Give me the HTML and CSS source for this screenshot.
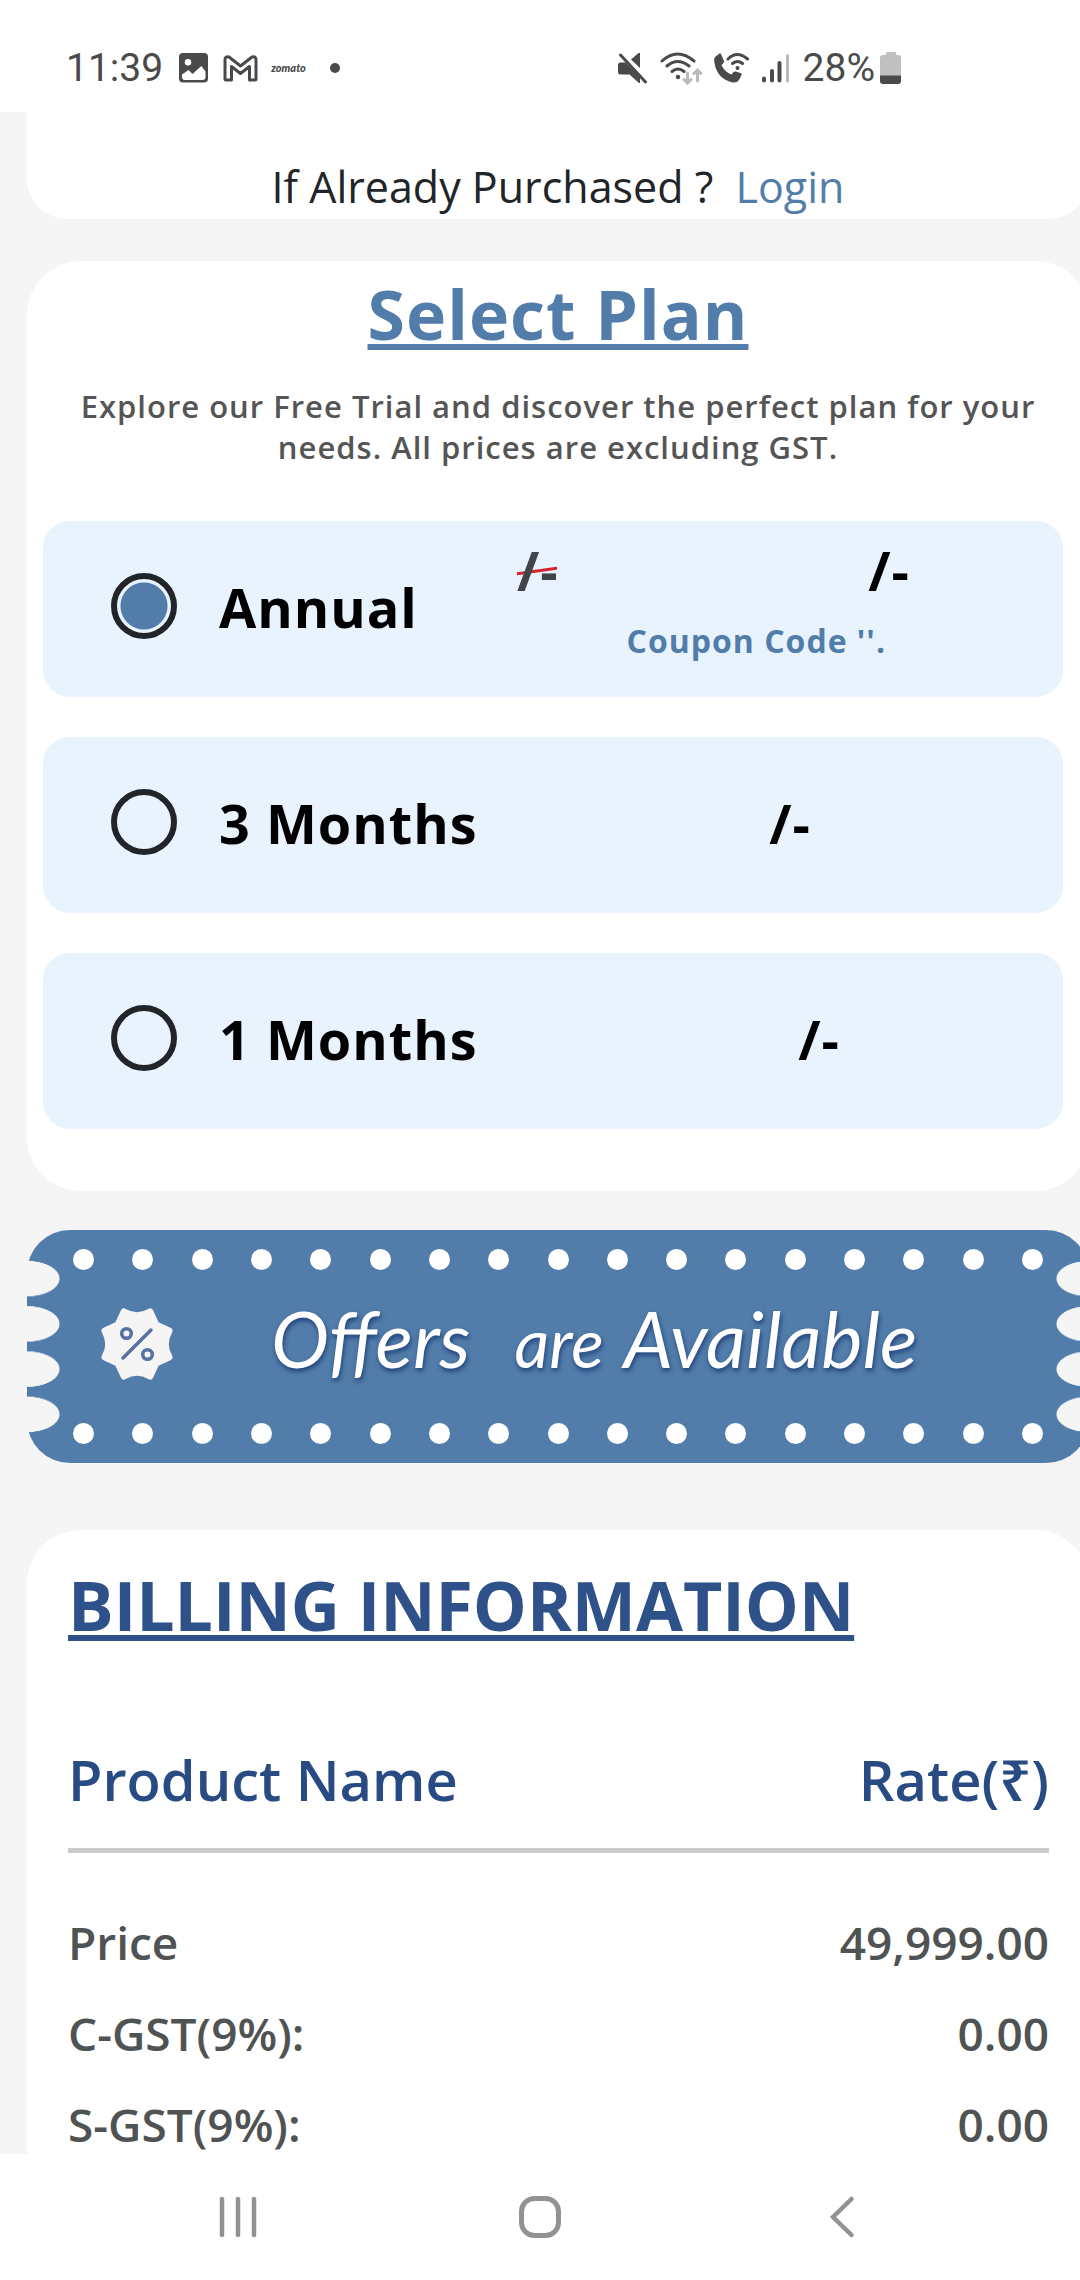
FILE: index.html
```html
<!DOCTYPE html>
<html lang="en">
<head>
<meta charset="utf-8">
<meta name="viewport" content="width=device-width, initial-scale=1">
<title>Select Plan</title>
<link rel="stylesheet" href="styles.css">
</head>
<body>
<header class="status">
  <div class="status-group">
    <span class="status-text">11:39</span>
    <svg class="icon-image" width="30" height="30" viewBox="0 0 30 30"><path fill-rule="evenodd" fill="#4a4a4a" d="M4 0h21a4 4 0 0 1 4 4v21.500a4 4 0 0 1-4 4H4a4 4 0 0 1-4-4V4a4 4 0 0 1 4-4zM9 6a3.200 3.200 0 1 0 0 6.500A3.200 3.200 0 0 0 9 6zM3 21.500V24q0 3 3 3h17.500q3 0 3-3v-5.500L22.300 13l-8.800 8L9.500 17z"/></svg>
    <svg class="icon-mail" width="35" height="28" viewBox="0 0 35 28"><path fill="none" stroke="#4a4a4a" stroke-width="3" stroke-linejoin="round" d="M2 25V6q0-4 4-3l11.500 9L29 3q4-1 4 3v19q0 1-1 1h-5.500V12.500l-9 7-9-7V26H3q-1 0-1-1z"/></svg>
    <span class="brand">zomato</span>
    <span class="status-dot"></span>
  </div>
  <div class="status-group status-right">
    <svg width="30" height="32" viewBox="0 0 30 32"><g fill="#4a4a4a"><path d="M2.500 10.500h5L22 25v6h-1l-9.500-8.500h-9Q0 22.500 0 20v-7q0-2.500 2.500-2.500zM13 7.500L20.500 1H22v15z"/></g><path d="M4 1.500l25 26" stroke="#fff" stroke-width="2"/><path d="M2.500 3l25 27" stroke="#4a4a4a" stroke-width="3" stroke-linecap="round"/></svg>
    <svg width="42" height="34" viewBox="0 0 42 34"><g fill="none" stroke="#4a4a4a" stroke-width="3" stroke-linecap="round"><path d="M2 10q15.500-14 32 0M7 15q10.500-9 22 0M12 20.500q6-5 12 0"/></g><circle cx="18" cy="26" r="2.200" fill="#4a4a4a"/><path d="M27.500 22v10M24 28.500l3.500 3.500 3.500-3.500M37.500 30V19M34 22.500l3.500-3.500 3.500 3.500" fill="none" stroke="#b9b9b9" stroke-width="3" stroke-linecap="round"/></svg>
    <svg width="35" height="32" viewBox="0 0 35 32"><path fill="#4a4a4a" d="M1 5L5.500 1.500q1-.5 1.500.5l3 7q.3 1-.5 2L7.500 13q3 7 10 9.500l2-2.500q.8-.8 2-.5l5 1.500q1.500.500 1 2L25 28q-2 3-6 2.500Q3 27 .500 11-.3 7 1 5z"/><g fill="none" stroke="#4a4a4a" stroke-width="3" stroke-linecap="round"><path d="M14 7q9-9 19.500 0M18.500 11.500q5-4 10 0"/></g><circle cx="23.500" cy="16" r="2" fill="#4a4a4a"/></svg>
    <svg width="30" height="32" viewBox="0 0 30 32"><g stroke="#4a4a4a" stroke-width="4" stroke-linecap="round"><path d="M3 26.500v2M11 19v9.500M18.500 11v17.500"/><path stroke="#b9b9b9" stroke-width="3" d="M26.500 3.500V29"/></g></svg>
    <span class="status-text">28%</span>
    <svg class="battery" width="22" height="34" viewBox="0 0 22 34"><path fill="#c0c0c0" d="M6 4V2q0-1 1-1h8q1 0 1 1v2h2q3 0 3 3v20H0V7q0-3 3-3z"/><path fill="#4a4a4a" d="M0 24.500h21V30q0 3-3 3H3q-3 0-3-3z"/></svg>
  </div>
</header>

<main class="content">
  <section class="card login">If Already Purchased ?&nbsp; <a href="#">Login</a></section>

  <section class="card plans">
    <h1 class="plans-title">Select Plan</h1>
    <p class="plans-note">Explore our Free Trial and discover the perfect plan for your needs. All prices are excluding GST.</p>
    <div class="plan-list">
      <label class="plan">
        <input class="plan-radio" type="radio" name="plan" checked>
        <span class="plan-name">Annual</span>
        <span class="plan-deal">
          <span class="price-line"><span class="price price-old">/-</span><span class="price">/-</span></span>
          <span class="coupon">Coupon Code ''.</span>
        </span>
      </label>
      <label class="plan">
        <input class="plan-radio" type="radio" name="plan">
        <span class="plan-name">3 Months</span>
        <span class="price price-center">/-</span>
      </label>
      <label class="plan">
        <input class="plan-radio" type="radio" name="plan">
        <span class="plan-name">1 Months</span>
        <span class="price price-center price-month">/-</span>
      </label>
    </div>
  </section>

  <section class="ticket">
    <div class="dots"><i></i><i></i><i></i><i></i><i></i><i></i><i></i><i></i><i></i><i></i><i></i><i></i><i></i><i></i><i></i><i></i><i></i></div>
    <div class="ticket-body">
      <svg width="76" height="76" viewBox="-38 -38 76 76"><path fill="#f5f5f5" stroke="#f5f5f5" stroke-width="7" stroke-linejoin="round" d="M-13-32Q0-24.500 13-32L19-19L32-13Q24.500 0 32 13L19 19L13 32Q0 24.500-13 32L-19 19L-32 13Q-24.500 0-32-13L-19-19z"/><g fill="none" stroke="#5871a3" stroke-width="3.500" stroke-linecap="round"><circle cx="-10.500" cy="-10.500" r="4.800"/><circle cx="10.500" cy="10.500" r="4.800"/><path d="M-14 14L14-14"/></g></svg>
      <p class="ticket-text"><span>Offers</span><small>are</small><span>Available</span></p>
    </div>
    <div class="dots"><i></i><i></i><i></i><i></i><i></i><i></i><i></i><i></i><i></i><i></i><i></i><i></i><i></i><i></i><i></i><i></i><i></i></div>
  </section>

  <section class="card billing">
    <h2 class="billing-title">BILLING INFORMATION</h2>
    <table class="bill">
      <thead><tr><th>Product Name</th><th>Rate(₹)</th></tr></thead>
      <tbody>
        <tr><td>Price</td><td>49,999.00</td></tr>
        <tr><td>C-GST(9%):</td><td>0.00</td></tr>
        <tr><td>S-GST(9%):</td><td>0.00</td></tr>
      </tbody>
    </table>
  </section>
</main>

<nav class="navbar">
  <button type="button" aria-label="Recent apps"><svg width="44" height="44" viewBox="0 0 44 44"><path d="M6 4v36M22 4v36M38 4v36" stroke="#929292" stroke-width="4.500" stroke-linecap="round"/></svg></button>
  <button type="button" aria-label="Home"><svg width="44" height="44" viewBox="0 0 44 44"><rect x="3.500" y="3.500" width="37" height="37" rx="13" fill="none" stroke="#929292" stroke-width="5"/></svg></button>
  <button type="button" aria-label="Back"><svg width="44" height="44" viewBox="0 0 44 44"><path d="M31.500 4L13 22l18.500 18" fill="none" stroke="#929292" stroke-width="4.500" stroke-linecap="round"/></svg></button>
</nav>
</body>
</html>
```
FILE: styles.css
```css
* { box-sizing: border-box; }

body {
  margin: 0;
  height: 100vh;
  display: flex;
  flex-direction: column;
  background: #fff;
  font-family: "Open Sans", "Noto Sans", sans-serif;
  color: #212529;
}

svg { display: block; flex: none; }

/* Status bar */
.status {
  flex: none;
  height: 112px;
  padding: 24px 178px 0 66px;
  display: flex;
  align-items: center;
  justify-content: space-between;
}
.status-group { display: flex; align-items: center; }
.status-right { gap: 12px; }
.status-text {
  font: 400 39px/48px Roboto, sans-serif;
  color: #4a4a4a;
}
.icon-image { margin-left: 16px; }
.icon-mail { margin-left: 14px; }
.brand {
  margin-left: 13px;
  font: italic 900 11px/16px Lato, sans-serif;
  color: #4a4a4a;
}
.status-dot {
  width: 10px;
  height: 10px;
  margin-left: 24px;
  border-radius: 50%;
  background: #4a4a4a;
}
.battery { margin-left: -7px; }

/* Page */
.content {
  flex: 1;
  min-height: 0;
  overflow: hidden;
  padding-left: 27px;
  background: #f5f5f5;
}
.card {
  margin-right: -9px;
  border-radius: 54px;
  background: #fff;
}

.login {
  padding-top: 43px;
  border-radius: 0 0 40px 40px;
  font-size: 43px;
  line-height: 64px;
  text-align: center;
}
.login a { color: #527daa; text-decoration: none; }

/* Plans */
.plans {
  margin-top: 42px;
  padding: 13px 26px 62px 16px;
  letter-spacing: 1px;
}
.plans-title {
  margin: 0 0 32px 10px;
  font-size: 68px;
  line-height: 80px;
  font-weight: 700;
  text-align: center;
  color: #527daa;
  text-decoration: underline;
  text-decoration-thickness: 6px;
  text-underline-offset: 4px;
}
.plans-note {
  margin: 0 16px 53px 26px;
  font-size: 31px;
  line-height: 41px;
  font-weight: 600;
  text-align: center;
  color: #555;
}
.plan-list { display: grid; gap: 40px; }
.plan {
  display: grid;
  grid-template-columns: 66px 256px 1fr;
  column-gap: 42px;
  align-items: center;
  height: 176px;
  padding: 0 0 4px 68px;
  border-radius: 27px;
  background: #e8f3fe;
  color: #000;
}
.plan-name, .price {
  font-size: 54px;
  line-height: 60px;
  font-weight: 700;
  white-space: nowrap;
}
.plan-radio {
  appearance: none;
  width: 66px;
  height: 66px;
  margin: 0 0 2px;
  border: 6px solid #212529;
  border-radius: 50%;
}
.plan-radio:checked {
  background: radial-gradient(circle, #527daa 23px, transparent 24px);
}
.plan-deal {
  display: grid;
  gap: 20px;
  padding: 0 153px 12px 0;
}
.price-line { display: flex; justify-content: space-between; }
.price-old {
  color: #40454a;
  background: linear-gradient(172deg, transparent calc(50% - 2px), #d8232f calc(50% - 1px), #d8232f calc(50% + 1px), transparent calc(50% + 2px)) 0 24px / 40px 14px no-repeat;
}
.coupon {
  padding-right: 24px;
  font-size: 32px;
  line-height: 42px;
  font-weight: 700;
  text-align: right;
  color: #527daa;
}
.price-center { text-align: center; }
.price-month { padding-left: 58px; }

/* Offer ticket */
.ticket {
  position: relative;
  margin: 39px -9px 0 0;
  padding: 19px 46px;
  border-radius: 43px;
  background: #527daa;
}
.ticket::before, .ticket::after {
  content: "";
  position: absolute;
  top: 26px;
  left: 0;
  width: 33px;
  height: 181px;
  background: radial-gradient(ellipse 33px 18px at 0 50%, #f5f5f5 97%, transparent) 0 0 / 33px 25% repeat-y;
}
.ticket::after { left: auto; right: 0; transform: scaleX(-1); }
.dots { display: flex; justify-content: space-between; }
.dots i {
  width: 21px;
  height: 21px;
  border-radius: 50%;
  background: #fff;
}
.ticket-body {
  display: flex;
  align-items: center;
  height: 153px;
  padding: 0 0 6px 26px;
}
.ticket-text {
  display: flex;
  align-items: baseline;
  margin: 0 0 8px 96px;
  font: italic 400 78px/84px Lato, sans-serif;
  color: #fff;
  text-shadow: 1px 3px 5px #1d3f78;
}
.ticket-text small { margin: 0 20px 0 44px; font-size: 68px; }

/* Billing */
.billing {
  margin-top: 67px;
  padding: 35px 40px 40px 41px;
}
.billing-title {
  margin: 0 0 98px;
  font-size: 68px;
  line-height: 80px;
  font-weight: 700;
  color: #2e5189;
  text-decoration: underline;
  text-decoration-thickness: 6px;
  text-underline-offset: 4px;
}
.bill { width: 100%; border-collapse: collapse; }
.bill th {
  padding: 0 0 33px;
  border-bottom: 5px solid #ccc;
  font-size: 56px;
  line-height: 72px;
  font-weight: 600;
  text-align: left;
  color: #284b84;
}
.bill tbody::before { content: ""; display: block; height: 44px; }
.bill td {
  padding: 0;
  font-size: 46px;
  line-height: 91px;
  font-weight: 600;
  color: #4f5353;
}
.bill th:last-child, .bill td:last-child { text-align: right; }

/* System navigation */
.navbar {
  flex: none;
  height: 126px;
  padding: 0 87px;
  display: flex;
  background: #fff;
}
.navbar button {
  flex: 1;
  display: flex;
  align-items: center;
  justify-content: center;
  padding: 0;
  border: 0;
  background: none;
}
```
